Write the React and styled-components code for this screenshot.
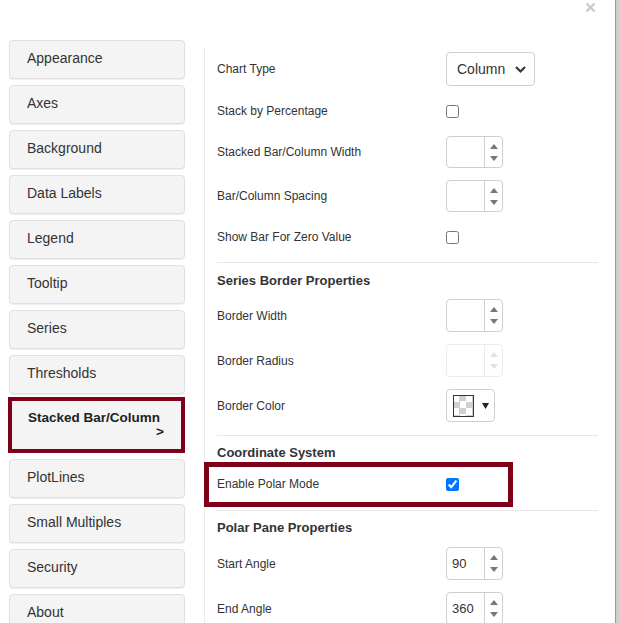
import React from "react";
import styled, { createGlobalStyle } from "styled-components";

const GlobalStyle = createGlobalStyle`
  html, body {
    margin: 0;
    padding: 0;
    background: #fff;
    font-family: "Liberation Sans", Arial, sans-serif;
    color: #333;
  }
`;

const Frame = styled.div`
  display: flex;
  width: 619px;
  height: 623px;
  overflow: hidden;
`;

const Main = styled.div`
  flex: 1;
  display: flex;
  flex-direction: column;
  min-width: 0;
`;

const Edge = styled.div`
  width: 3px;
  flex-shrink: 0;
  border-left: 1px solid #9a9a9a;
  background: #cdcdcd;
`;

const Header = styled.div`
  height: 40px;
  flex-shrink: 0;
  display: flex;
  justify-content: flex-end;
  align-items: flex-start;
  padding: 2px 19px 0 0;
  box-sizing: border-box;
`;

const CloseButton = styled.button`
  border: 0;
  background: none;
  padding: 0;
  width: 11px;
  height: 11px;
  display: flex;
  cursor: pointer;
`;

const Body = styled.div`
  display: flex;
  flex-shrink: 0;
  padding-left: 9px;
`;

const Sidebar = styled.nav`
  width: 176px;
  flex-shrink: 0;
  display: flex;
  flex-direction: column;
`;

const NavItem = styled.div`
  box-sizing: border-box;
  height: 39px;
  flex-shrink: 0;
  margin-bottom: 6px;
  padding: 0 17px 3px;
  display: flex;
  align-items: center;
  background: #f4f4f4;
  border: 1px solid #e0e0e0;
  border-radius: 4px;
  box-shadow: 0 1px 1px rgba(0, 0, 0, 0.07);
  font-size: 14px;
  color: #333;
`;

const ActiveNavItem = styled.div`
  box-sizing: border-box;
  height: 56px;
  flex-shrink: 0;
  margin: -3px 0 6px -1px;
  padding: 9px 17px 0 16px;
  background: #f4f4f4;
  border: 4px solid #7e0019;
  font-size: 13.5px;
  font-weight: bold;
  line-height: 16px;
  color: #222;
  white-space: nowrap;
`;

const NavArrow = styled.span`
  display: block;
  text-align: right;
  margin-top: -2px;
`;

const Panel = styled.section`
  flex: 1;
  margin: 8px 0 0 19px;
  padding: 4px 17px 0 12px;
  border-left: 1px solid #ececec;
`;

const Row = styled.div`
  position: relative;
  display: flex;
  align-items: center;
  height: ${(p) => p.$h || 33}px;
  margin-bottom: ${(p) => (p.$mb === undefined ? 12 : p.$mb)}px;

  ${(p) =>
    p.$highlight &&
    `
    &::before {
      content: "";
      position: absolute;
      top: -9px;
      bottom: -10px;
      left: -13px;
      width: 309px;
      border: 5px solid #7e0019;
      box-sizing: border-box;
      pointer-events: none;
    }
  `}
`;

const Label = styled.label`
  width: 229px;
  flex-shrink: 0;
  font-size: 12px;
  color: #333;
`;

const Divider = styled.hr`
  border: 0;
  border-top: 1px solid #e8e8e8;
  margin: 0 0 ${(p) => p.$mb || 9}px;
`;

const Heading = styled.h4`
  margin: 0 0 ${(p) => p.$mb || 10}px;
  height: 16px;
  line-height: 16px;
  font-size: 13px;
  font-weight: bold;
  color: #333;
`;

const SelectBox = styled.div`
  box-sizing: border-box;
  width: 89px;
  height: 34px;
  border: 1px solid #cfcfcf;
  border-radius: 4px;
  display: flex;
  align-items: center;
  justify-content: space-between;
  padding: 0 8px 0 10px;
  font-size: 14px;
  color: #333;
`;

const Checkbox = styled.input`
  width: 13px;
  height: 13px;
  margin: 0;
`;

const Spinner = styled.div`
  box-sizing: border-box;
  width: 57px;
  height: ${(p) => p.$h || 33}px;
  border: 1px solid ${(p) => (p.$disabled ? "#ececec" : "#cfcfcf")};
  border-radius: 4px;
  display: flex;
`;

const SpinValue = styled.div`
  width: 37px;
  display: flex;
  align-items: center;
  padding-left: 5px;
  box-sizing: border-box;
  font-size: 13px;
  color: #333;
`;

const SpinArrows = styled.div`
  flex: 1;
  border-left: 1px solid ${(p) => (p.$disabled ? "#ececec" : "#cfcfcf")};
  display: flex;
  flex-direction: column;
  justify-content: space-around;
  align-items: center;
  padding: 3px 0;
`;

const ColorButton = styled.div`
  box-sizing: border-box;
  width: 49px;
  height: 33px;
  border: 1px solid #cfcfcf;
  border-radius: 4px;
  display: flex;
  align-items: center;
  padding-left: 6px;
  gap: 8px;
`;

const Swatch = styled.div`
  box-sizing: border-box;
  width: 21px;
  height: 22px;
  border: 1px solid #333;
  background-color: #fff;
  background-image: conic-gradient(
    #d0d0d0 0 25%,
    #fff 0 50%,
    #d0d0d0 0 75%,
    #fff 0
  );
  background-size: 13px 13px;
  background-position: -1px -1px;
`;

const Chevron = () => (
  <svg width="11" height="7" viewBox="0 0 11 7">
    <path d="M1 1l4.5 4.5L10 1" fill="none" stroke="#333" strokeWidth="2" />
  </svg>
);

const Tri = ({ down, color }) => (
  <svg width="8" height="5" viewBox="0 0 8 5">
    <path d={down ? "M0 0h8L4 5z" : "M0 5h8L4 0z"} fill={color} />
  </svg>
);

const NumberSpin = ({ value = "", disabled, h }) => {
  const c = disabled ? "#e2e2e2" : "#777";
  return (
    <Spinner $disabled={disabled} $h={h}>
      <SpinValue>{value}</SpinValue>
      <SpinArrows $disabled={disabled}>
        <Tri color={c} />
        <Tri down color={c} />
      </SpinArrows>
    </Spinner>
  );
};

const navItems = [
  "Appearance",
  "Axes",
  "Background",
  "Data Labels",
  "Legend",
  "Tooltip",
  "Series",
  "Thresholds",
  "Stacked Bar/Column",
  "PlotLines",
  "Small Multiples",
  "Security",
  "About",
];

export default function App() {
  return (
    <Frame>
      <GlobalStyle />
      <Main>
        <Header>
          <CloseButton aria-label="Close">
            <svg width="11" height="11" viewBox="0 0 11 11">
              <path
                d="M1.5 1.5l8 8M9.5 1.5l-8 8"
                stroke="#cbcbcb"
                strokeWidth="2.4"
              />
            </svg>
          </CloseButton>
        </Header>
        <Body>
          <Sidebar>
            {navItems.map((n) =>
              n === "Stacked Bar/Column" ? (
                <ActiveNavItem key={n}>
                  {n}
                  <NavArrow>&gt;</NavArrow>
                </ActiveNavItem>
              ) : (
                <NavItem key={n}>{n}</NavItem>
              )
            )}
          </Sidebar>

          <Panel>
            <Row $h={34}>
              <Label>Chart Type</Label>
              <SelectBox>
                Column
                <Chevron />
              </SelectBox>
            </Row>
            <Row $h={26}>
              <Label>Stack by Percentage</Label>
              <Checkbox type="checkbox" />
            </Row>
            <Row $h={32}>
              <Label>Stacked Bar/Column Width</Label>
              <NumberSpin h={32} />
            </Row>
            <Row $h={32}>
              <Label>Bar/Column Spacing</Label>
              <NumberSpin h={32} />
            </Row>
            <Row $h={26}>
              <Label>Show Bar For Zero Value</Label>
              <Checkbox type="checkbox" />
            </Row>

            <Divider $mb={10} />
            <Heading>Series Border Properties</Heading>
            <Row>
              <Label>Border Width</Label>
              <NumberSpin />
            </Row>
            <Row>
              <Label>Border Radius</Label>
              <NumberSpin disabled />
            </Row>
            <Row $mb={13}>
              <Label>Border Color</Label>
              <ColorButton>
                <Swatch />
                <svg width="7" height="6" viewBox="0 0 7 6">
                  <path d="M0 0h7L3.5 6z" fill="#222" />
                </svg>
              </ColorButton>
            </Row>

            <Divider />
            <Heading>Coordinate System</Heading>
            <Row $h={26} $mb={13} $highlight>
              <Label>Enable Polar Mode</Label>
              <Checkbox type="checkbox" defaultChecked />
            </Row>

            <Divider />
            <Heading $mb={11}>Polar Pane Properties</Heading>
            <Row>
              <Label>Start Angle</Label>
              <NumberSpin value="90" />
            </Row>
            <Row>
              <Label>End Angle</Label>
              <NumberSpin value="360" />
            </Row>
          </Panel>
        </Body>
      </Main>
      <Edge />
    </Frame>
  );
}
